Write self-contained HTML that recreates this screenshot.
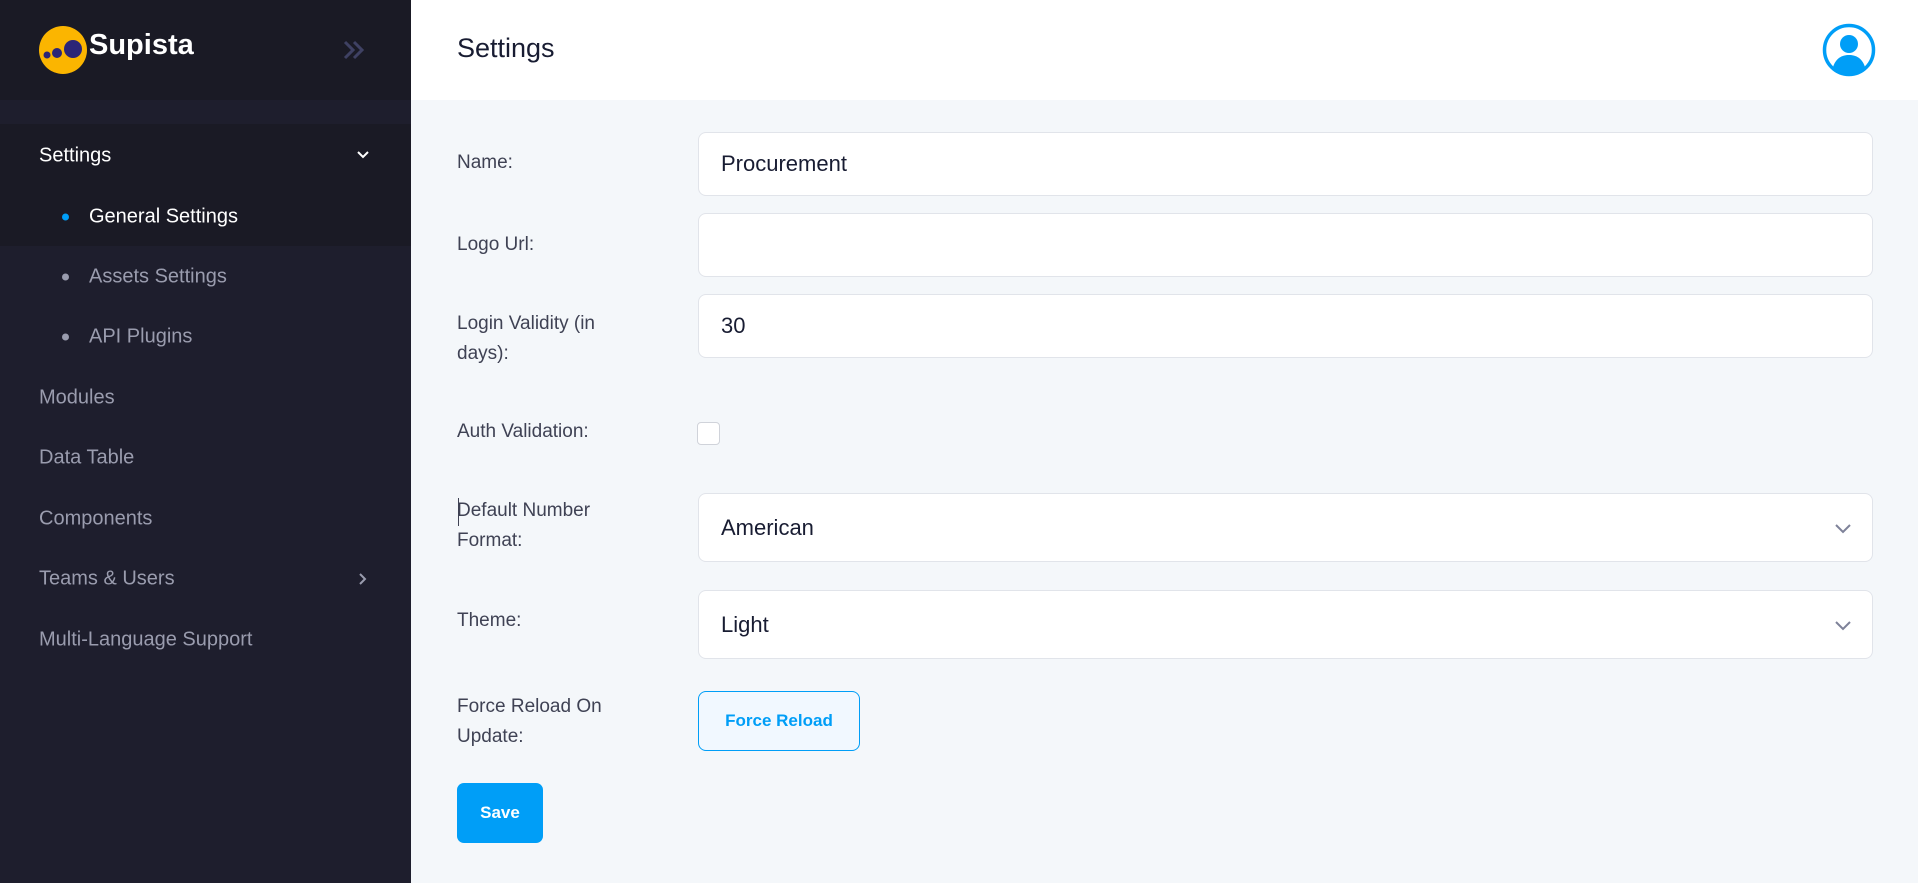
<!DOCTYPE html>
<html><head><meta charset="utf-8"><style>
*{box-sizing:border-box;margin:0;padding:0}
body{width:1918px;height:883px;position:relative;overflow:hidden;font-family:"Liberation Sans",sans-serif;background:#f4f7fa}
.a{position:absolute}
#side{left:0;top:0;width:411px;height:883px;background:#1e1e2d}
#sh{left:0;top:0;width:411px;height:100px;background:#1a1a25}
#sset{left:0;top:124px;width:411px;height:122px;background:#1a1a25}
.mi{position:absolute;left:39px;font-size:20px;color:#9a9cae;transform:translateY(-50%)}
.sub{left:89px}
.dot{position:absolute;width:7px;height:7px;border-radius:50%;background:#9a9cae;left:62px;transform:translateY(-50%)}
#hdr{left:411px;top:0;width:1507px;height:100px;background:#fff}
.lbl{position:absolute;left:457px;font-size:19px;color:#3f4254;line-height:30px}
.inp{position:absolute;left:698px;width:1175px;background:#fff;border:1px solid #e1e4ea;border-radius:8px;font-size:22px;color:#181c32;padding-left:22px;display:flex;align-items:center}
.chev{position:absolute;right:20px;top:50%;margin-top:-6px}
</style></head><body>
<div class="a" id="side"></div>
<div class="a" id="sh"></div>
<svg class="a" style="left:38px;top:26px" width="50" height="50" viewBox="0 0 50 50"><circle cx="25" cy="24" r="24" fill="#fbb500"/><circle cx="9" cy="29" r="3.5" fill="#2b2577"/><circle cx="19" cy="27" r="5" fill="#2b2577"/><circle cx="35" cy="23" r="9" fill="#2b2577"/></svg>
<div class="a" style="left:89px;top:29px;font-size:29px;font-weight:bold;color:#fff">Supista</div>
<svg class="a" style="left:343px;top:40px" width="24" height="20" viewBox="0 0 24 20"><path d="M2 2l8 8-8 8M11 2l8 8-8 8" fill="none" stroke="#3f4163" stroke-width="3"/></svg>
<div class="a" id="sset"></div>
<div class="mi" style="top:156px;color:#fff">Settings</div>
<svg class="a" style="left:356px;top:150px" width="14" height="10" viewBox="0 0 14 10"><path d="M2 2l5 5 5-5" fill="none" stroke="#fff" stroke-width="2"/></svg>
<div class="dot" style="top:217px;background:#009ef7"></div><div class="mi sub" style="top:217px;color:#fff">General Settings</div>
<div class="dot" style="top:277px"></div><div class="mi sub" style="top:277px">Assets Settings</div>
<div class="dot" style="top:337px"></div><div class="mi sub" style="top:337px">API Plugins</div>
<div class="mi" style="top:398px">Modules</div>
<div class="mi" style="top:458px">Data Table</div>
<div class="mi" style="top:519px">Components</div>
<div class="mi" style="top:579px">Teams &amp; Users</div>
<svg class="a" style="left:358px;top:572px" width="10" height="14" viewBox="0 0 10 14"><path d="M2 2l5 5-5 5" fill="none" stroke="#9a9cae" stroke-width="2"/></svg>
<div class="mi" style="top:640px">Multi-Language Support</div>

<div class="a" id="hdr"></div>
<div class="a" style="left:457px;top:33px;font-size:27px;color:#181c32">Settings</div>
<svg class="a" style="left:1822px;top:23px" width="54" height="54" viewBox="0 0 54 54"><circle cx="27" cy="27" r="24.5" fill="#fff" stroke="#009ef7" stroke-width="3.5"/><circle cx="27" cy="21" r="9" fill="#009ef7"/><path d="M11 44c3-9 9-12 16-12s13 3 16 12c-4 4-10 7-16 7s-12-3-16-7z" fill="#009ef7"/></svg>

<div class="lbl" style="top:148px">Name:</div>
<div class="inp" style="top:132px;height:64px">Procurement</div>
<div class="lbl" style="top:230px">Logo Url:</div>
<div class="inp" style="top:213px;height:64px"></div>
<div class="lbl" style="top:309px">Login Validity (in<br>days):</div>
<div class="inp" style="top:294px;height:64px">30</div>
<div class="lbl" style="top:417px">Auth Validation:</div>
<div class="a" style="left:697px;top:422px;width:23px;height:23px;border:1px solid #d0d3da;border-radius:4px;background:#fff"></div>
<div class="lbl" style="top:496px">Default Number<br>Format:</div>
<div class="a" style="left:458px;top:498px;width:1px;height:28px;background:#3f4254"></div>
<div class="inp" style="top:493px;height:69px">American<svg class="chev" width="18" height="12" viewBox="0 0 18 12"><path d="M2 3l7 7 7-7" fill="none" stroke="#7e8299" stroke-width="2"/></svg></div>
<div class="lbl" style="top:606px">Theme:</div>
<div class="inp" style="top:590px;height:69px">Light<svg class="chev" width="18" height="12" viewBox="0 0 18 12"><path d="M2 3l7 7 7-7" fill="none" stroke="#7e8299" stroke-width="2"/></svg></div>
<div class="lbl" style="top:692px">Force Reload On<br>Update:</div>
<div class="a" style="left:698px;top:691px;width:162px;height:60px;border:1.5px solid #009ef7;border-radius:8px;background:#f1f8ff;color:#009ef7;font-weight:bold;font-size:17px;display:flex;align-items:center;justify-content:center">Force Reload</div>
<div class="a" style="left:457px;top:783px;width:86px;height:60px;border-radius:7px;background:#009ef7;color:#fff;font-weight:bold;font-size:17px;display:flex;align-items:center;justify-content:center">Save</div>
</body></html>
